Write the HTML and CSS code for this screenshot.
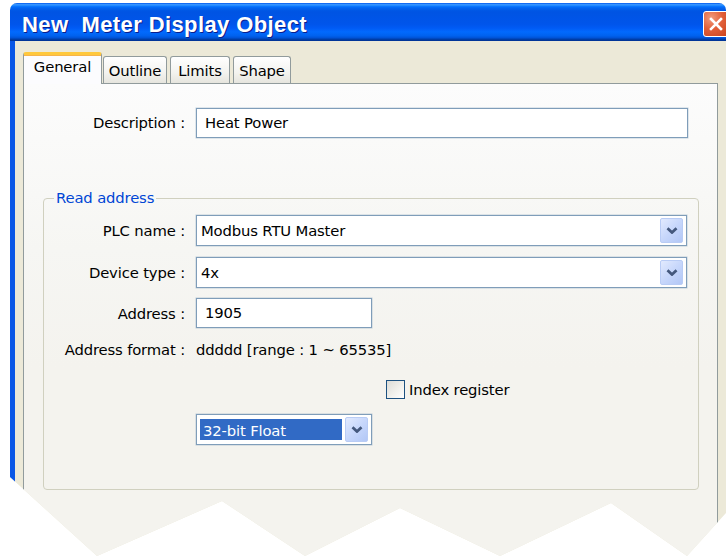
FILE: index.html
```html
<!DOCTYPE html>
<html lang="en">
<head>
<meta charset="utf-8">
<title>New Meter Display Object</title>
<link rel="stylesheet" href="styles.css">
</head>
<body>
<div class="window">
  <div class="titlebar">
    <span class="title">New  Meter Display Object</span>
    <span class="close-btn" aria-label="Close">
      <svg width="14" height="14" viewBox="0 0 14 14"><path d="M2 2 L12 12 M12 2 L2 12" stroke="#fff" stroke-width="2.6" stroke-linecap="square"/></svg>
    </span>
  </div>
  <div class="client">
    <div class="tabs">
      <div class="tab tab-active tab-general">General</div>
      <div class="tab tab-outline">Outline</div>
      <div class="tab tab-limits">Limits</div>
      <div class="tab tab-shape">Shape</div>
    </div>
    <div class="panel">
      <div class="frow desc-row">
        <label class="lbl lbl-desc">Description :</label>
        <div class="textbox fill">Heat Power</div>
      </div>

      <fieldset class="group">
        <legend>Read address</legend>

        <div class="frow first">
          <label class="lbl">PLC name :</label>
          <div class="combo fill">
            <span class="combo-text">Modbus RTU Master</span>
            <span class="combo-btn"><svg width="12" height="7" viewBox="0 0 12 7"><path d="M1.5 1.3 L6 5.5 L10.5 1.3" fill="none" stroke="#44587D" stroke-width="2.8"/></svg></span>
          </div>
        </div>

        <div class="frow gap11">
          <label class="lbl">Device type :</label>
          <div class="combo fill">
            <span class="combo-text">4x</span>
            <span class="combo-btn"><svg width="12" height="7" viewBox="0 0 12 7"><path d="M1.5 1.3 L6 5.5 L10.5 1.3" fill="none" stroke="#44587D" stroke-width="2.8"/></svg></span>
          </div>
        </div>

        <div class="frow gap10">
          <label class="lbl">Address :</label>
          <div class="textbox short">1905</div>
        </div>

        <div class="frow format-row">
          <label class="lbl">Address format :</label>
          <span class="plain">ddddd [range : 1 ~ 65535]</span>
        </div>

        <div class="frow check-row">
          <span class="lbl"></span>
          <label class="check"><span class="checkbox"></span>Index register</label>
        </div>

        <div class="frow float-row">
          <span class="lbl"></span>
          <div class="combo short">
            <span class="combo-text selected">32-bit Float</span>
            <span class="combo-btn"><svg width="12" height="7" viewBox="0 0 12 7"><path d="M1.5 1.3 L6 5.5 L10.5 1.3" fill="none" stroke="#44587D" stroke-width="2.8"/></svg></span>
          </div>
        </div>
      </fieldset>
    </div>
  </div>
</div>
</body>
</html>
```

FILE: styles.css
```css
html, body {
  margin: 0;
  padding: 0;
  background: #fff;
  overflow: hidden;
}

body {
  width: 726px;
  height: 556px;
  font-family: "DejaVu Sans", "Liberation Sans", sans-serif;
  font-size: 14.8px;
  letter-spacing: -0.15px;
  color: #000;
}

/* dialog frame, torn off along the bottom */
.window {
  margin: 3px 0 0 10px;
  width: 716px;
  height: 553px;
  display: flex;
  flex-direction: column;
  border-radius: 7px 7px 0 0;
  background: #ECE9D8;
  clip-path: polygon(0 0, 716px 0, 716px 510px, 677px 553px, 601px 500px, 490px 553px, 390px 505px, 295px 553px, 212px 498px, 87px 553px, 0 474px);
}

.titlebar {
  height: 38px;
  flex: none;
  display: flex;
  align-items: center;
  padding: 3px 0 0 12px;
  box-sizing: border-box;
  border-radius: 7px 7px 0 0;
  background: linear-gradient(to bottom,
    #0058EE 0%, #3593FF 4%, #288EFF 6%, #127DFF 8%, #036FFC 10%,
    #0262EE 14%, #0057E5 20%, #0054E3 24%, #0055EB 56%, #005BF5 66%,
    #026AFE 76%, #0062EF 86%, #0052D6 92%, #0040AB 95%, #003092 100%);
}

.title {
  flex: 1;
  white-space: pre;
  color: #fff;
  font-family: "Liberation Sans", "DejaVu Sans", sans-serif;
  font-weight: bold;
  font-size: 22px;
  letter-spacing: 0.4px;
  text-shadow: 1px 1px 0 #0A1E8C;
  padding-top: 2px;
}

.close-btn {
  width: 26px;
  height: 26px;
  margin-right: -3px;
  box-sizing: border-box;
  border: 1px solid #fff;
  border-radius: 3px;
  background: radial-gradient(circle at 30% 25%, #F19B7E 0%, #E2603A 45%, #C7411B 100%);
  display: flex;
  align-items: center;
  justify-content: center;
}

.client {
  flex: 1;
  display: flex;
  flex-direction: column;
  border-left: 5px solid #0A57E6;
  padding: 0 8px;
  min-height: 0;
}

/* tab strip */
.tabs {
  display: flex;
  align-items: flex-end;
  margin-top: 11px;
  height: 31px;
  flex: none;
  position: relative;
  z-index: 1;
}

.tab {
  height: 27px;
  box-sizing: border-box;
  border: 1px solid #919B9C;
  border-bottom: none;
  border-radius: 3px 3px 0 0;
  background: linear-gradient(to bottom, #FFFFFF, #F3F3EF 60%, #E6E5DE);
  text-align: center;
  line-height: 27px;
  margin-right: 3px;
}

.tab-active {
  height: 32px;
  margin-bottom: -1px;
  margin-right: 1px;
  border-top: 3px solid #FFC83C;
  box-shadow: inset 0 1px 0 #F6B44A;
  background: #FCFCFE;
  line-height: 24px;
  padding-bottom: 4px;
}

.tab-general { width: 79px; }
.tab-outline { width: 64px; }
.tab-limits  { width: 60px; }
.tab-shape   { width: 58px; }

/* tab page */
.panel {
  flex: 1;
  border: 1px solid #919B9C;
  border-bottom: none;
  background: linear-gradient(to bottom, #FCFCFC 0%, #F6F6F3 35%, #F4F3EE 60%);
  padding-top: 24px;
}

.frow {
  display: flex;
  align-items: center;
}

.lbl {
  width: 141px;
  flex: none;
  margin-right: 11px;
  text-align: right;
  white-space: pre;
}

.desc-row .lbl-desc {
  width: 161px;
  position: relative;
  top: -1px;
}

.desc-row {
  padding-right: 29px;
}

.textbox,
.combo {
  box-sizing: border-box;
  border: 1px solid #7F9DB9;
  box-shadow: 0 0 0 0.5px rgba(127, 157, 185, 0.45);
  background: #fff;
  white-space: pre;
}

.textbox {
  height: 30px;
  line-height: 28px;
  padding-left: 8px;
}

.fill { flex: 1; }
.short { width: 176px; }

.combo {
  height: 31px;
  display: flex;
  align-items: center;
  padding: 3px;
}

.combo-text {
  flex: 1;
  padding-left: 1px;
  line-height: 23px;
}

.combo-text.selected {
  align-self: stretch;
  margin: 1px 3px 1px 0;
  background: #316AC5;
  color: #fff;
  padding-left: 3px;
}

.combo-btn {
  width: 23px;
  height: 25px;
  flex: none;
  box-sizing: border-box;
  border: 1px solid #B9CCF5;
  border-radius: 2px;
  background: linear-gradient(135deg, #E2EAFE 0%, #C7D7FB 50%, #B2C7F6 100%);
  display: flex;
  align-items: center;
  justify-content: center;
}

/* "Read address" group box */
.group {
  margin: 51px 18px 0 19px;
  padding: 8px 11px 44px 0;
  border: 1px solid #D0D0BF;
  border-radius: 4px;
  min-inline-size: 0;
}

.group legend {
  margin-left: 10px;
  padding: 0 2px;
  line-height: 18px;
  color: #0046D5;
}

.gap11 { margin-top: 11px; }
.gap10 { margin-top: 10px; }

.format-row {
  margin-top: 13px;
  line-height: 18px;
}

.check-row {
  margin-top: 21px;
}

.check {
  display: flex;
  align-items: center;
  margin-left: 190px;
  line-height: 19px;
}

.checkbox {
  width: 19px;
  height: 19px;
  box-sizing: border-box;
  border: 1px solid #1C5180;
  background: linear-gradient(135deg, #DCDCD7 0%, #F0F0EC 55%, #FFFFFF 100%);
  margin-right: 4px;
}

.float-row {
  margin-top: 15px;
}
```
